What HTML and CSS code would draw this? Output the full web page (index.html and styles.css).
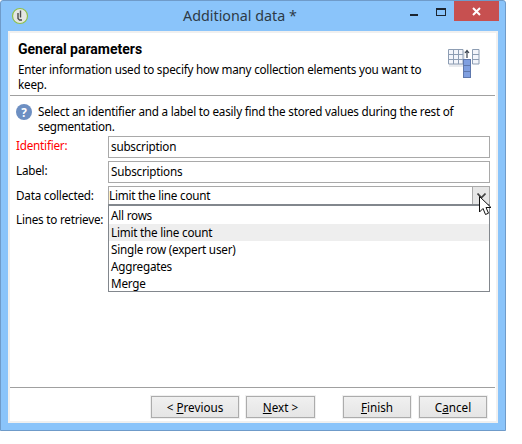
FILE: index.html
```html
<!doctype html>
<html>
<head>
<title>Additional data</title>
<link rel="stylesheet" href="styles.css">
</head>
<body>
	<div class="window">
		<div class="titlebar">
			<svg class="app-icon" width="18" height="18" viewBox="0 0 18 18">
				<circle cx="9" cy="9" r="7.5" fill="#e4e6e2" stroke="#8fc04a" stroke-width="1.2"/>
				<path d="M9.5 3.5v7M7 6v5.5l2 2" fill="none" stroke="#4a4a4a" stroke-width="1.4"/>
				<circle cx="10" cy="13" r="1" fill="#4a4a4a"/>
			</svg>
			<div class="title">Additional data *</div>
			<div class="controls">
				<div class="ctl-min"></div>
				<div class="ctl-max"></div>
				<div class="ctl-close">
					<svg width="9" height="9" viewBox="0 0 9 9"><path d="M1 1l7 7M8 1l-7 7" stroke="#fff" stroke-width="2"/></svg>
				</div>
			</div>
		</div>
		<div class="client">
			<div class="header">
				<div class="header-text">
					<h1>General parameters</h1>
					<p>Enter information used to specify how many collection elements you want to keep.</p>
				</div>
				<svg class="header-icon" width="32" height="30" viewBox="0 0 32 30">
					<rect x="1" y="2" width="16" height="16" fill="#d9dce2" opacity=".6"/>
					<path d="M.5.5h14.5v14.5h-14.5zM.5 5.5h14.5M.5 10.5h14.5M5.5.5v14.500M10.500.5v14.500" fill="#f3f5fb" stroke="#8d9db3"/>
					<path d="M24.500.5h6.500v14.500h-6.500zM24.500 5.500h6.500M24.500 10.500h6.500" fill="#f3f5fb" stroke="#8d9db3"/>
					<rect x="15.500" y="10.500" width="7" height="18" fill="#7f9fe0" stroke="#5f78ad"/>
					<path d="M15.500 16.500h7M15.500 22.500h7" stroke="#5f78ad"/>
					<path d="M19 9V2M17 4l2-2.500 2 2.500" fill="none" stroke="#39424f" stroke-width="1.200"/>
				</svg>
			</div>
			<div class="sep"></div>
			<div class="body">
				<div class="hint">
					<div class="hint-icon">?</div>
					<p>Select an identifier and a label to easily find the stored values during the rest of segmentation.</p>
				</div>
				<div class="row">
					<label class="required">Identifier:</label>
					<div class="input">subscription</div>
				</div>
				<div class="row">
					<label>Label:</label>
					<div class="input">Subscriptions</div>
				</div>
				<div class="row">
					<label>Data collected:</label>
					<div class="combo">
						<span class="combo-text">Limit the line count</span>
						<div class="combo-btn">
							<svg width="9" height="6" viewBox="0 0 9 6"><path d="M.5.500l4 4 4-4" fill="none" stroke="#444" stroke-width="1.600"/></svg>
						</div>
						<div class="list">
							<div class="item">All rows</div>
							<div class="item active">Limit the line count</div>
							<div class="item">Single row (expert user)</div>
							<div class="item">Aggregates</div>
							<div class="item">Merge</div>
						</div>
						<svg class="cursor" width="14" height="21" viewBox="0 0 14 21">
							<path d="M.5.500v15.500l3.500-3.500 2.500 6 3-1.300-2.500-5.700h5z" fill="#fff" stroke="#111" stroke-width="1"/>
						</svg>
					</div>
				</div>
				<div class="row row-lines">
					<label>Lines to retrieve:</label>
				</div>
			</div>
			<div class="sep"></div>
			<div class="footer">
				<button class="btn">&lt; <u>P</u>revious</button>
				<button class="btn btn-next"><u>N</u>ext &gt;</button>
				<button class="btn btn-finish"><u>F</u>inish</button>
				<button class="btn btn-cancel">C<u>a</u>ncel</button>
			</div>
		</div>
	</div>
</body>
</html>
```
FILE: styles.css
```css
html, body {
	margin: 0;
	background: #fff;
}
body {
	font-family: "Noto Sans", sans-serif;
	font-size: 11.7px;
	letter-spacing: -.22px;
	color: #000;
}
.window {
	width: 506px;
	height: 431px;
	box-sizing: border-box;
	border: 1px solid #6f9bc9;
	border-radius: 3px 3px 0 0;
	background: #8ac4fa;
	padding: 0 7px 7px;
	display: flex;
	flex-direction: column;
}
.titlebar {
	height: 30px;
	display: flex;
	align-items: flex-start;
	position: relative;
}
.app-icon {
	margin: 6px 0 0 3px;
}
.title {
	position: absolute;
	left: 0;
	right: 26px;
	top: 5px;
	text-align: center;
	font-size: 14.3px;
	letter-spacing: 0;
	line-height: 20px;
	color: #2d3a46;
}
.controls {
	margin-left: auto;
	margin-right: -1px;
	display: flex;
}
.ctl-min {
	width: 8px;
	height: 2px;
	margin: 13px 0 0;
	background: #1c2530;
}
.ctl-max {
	width: 8px;
	height: 5px;
	margin: 7px 8px 0 18px;
	border: 1px solid #1c2530;
	border-top-width: 2px;
}
.ctl-close {
	width: 45px;
	height: 20px;
	background: #c75050;
	display: flex;
	align-items: center;
	justify-content: center;
}
.client {
	flex: 1;
	border: 2px solid #f0f0f0;
	background: #fff;
	display: flex;
	flex-direction: column;
	min-height: 0;
}
.header {
	height: 62px;
	display: flex;
	justify-content: space-between;
	box-sizing: border-box;
	padding: 6px 16px 0 8px;
}
.header-text {
	width: 420px;
}
h1 {
	margin: 0;
	font-family: Roboto, sans-serif;
	font-size: 14px;
	letter-spacing: 0;
	line-height: 20px;
	font-weight: 700;
}
.header-text p {
	margin: 3px 0 0;
	line-height: 15px;
}
.header-icon {
	margin-top: 10px;
}
.sep {
	height: 1px;
	background: #a0a0a0;
	margin-right: 1px;
}
.body {
	flex: 1;
	padding: 8px 6px 0;
}
.hint {
	display: flex;
	gap: 6px;
}
.hint-icon {
	width: 16px;
	height: 16px;
	border-radius: 50%;
	background: #6d8fc2;
	color: #fff;
	font-weight: 700;
	text-align: center;
	line-height: 16px;
	flex: none;
}
.hint p {
	margin: 0;
	line-height: 15px;
}
.row {
	display: flex;
	margin-top: 3px;
}
.hint + .row {
	margin-top: 2px;
}
.row label {
	width: 92px;
	flex: none;
	line-height: 19px;
	white-space: nowrap;
}
.required {
	color: #f00;
}
.input {
	flex: 1;
	height: 22px;
	box-sizing: border-box;
	border: 1px solid #a9a9a9;
	line-height: 18px;
	padding-left: 2px;
}
.combo {
	flex: 1;
	height: 19px;
	box-sizing: border-box;
	border: 1px solid #a9a9a9;
	line-height: 16px;
	padding-left: 0;
	position: relative;
	display: flex;
	justify-content: space-between;
}
.combo-btn {
	width: 16px;
	background: #e6e6e6;
	border-left: 1px solid #a9a9a9;
	display: flex;
	align-items: center;
	justify-content: center;
}
.list {
	position: absolute;
	left: -1px;
	right: -1px;
	top: 17px;
	height: 88px;
	box-sizing: border-box;
	background: #fff;
	border: 1px solid #82878d;
	border-top-width: 2px;
	padding-top: 1px;
}
.item {
	height: 17px;
	line-height: 17px;
	padding-left: 2px;
}
.active {
	background: #eee;
}
.cursor {
	position: absolute;
	left: 370px;
	top: 9px;
}
.row-lines {
	margin-top: 5px;
}
.footer {
	height: 33px;
	display: flex;
	align-items: flex-start;
	padding: 8px 0 0 141px;
	box-sizing: border-box;
}
.btn {
	width: 88px;
	height: 22px;
	box-sizing: border-box;
	border: 1px solid #acacac;
	background: linear-gradient(#f0f0f0, #e5e5e5);
	box-shadow: 0 0 0 1px #f0f0f0;
	font-family: inherit;
	font-size: 11.7px;
	color: #000;
	padding: 0;
	line-height: 18px;
}
.btn-next {
	width: 69px;
	margin-left: 7px;
}
.btn-finish {
	width: 68px;
	margin-left: 28px;
}
.btn-cancel {
	width: 68px;
	margin-left: 8px;
}
```
